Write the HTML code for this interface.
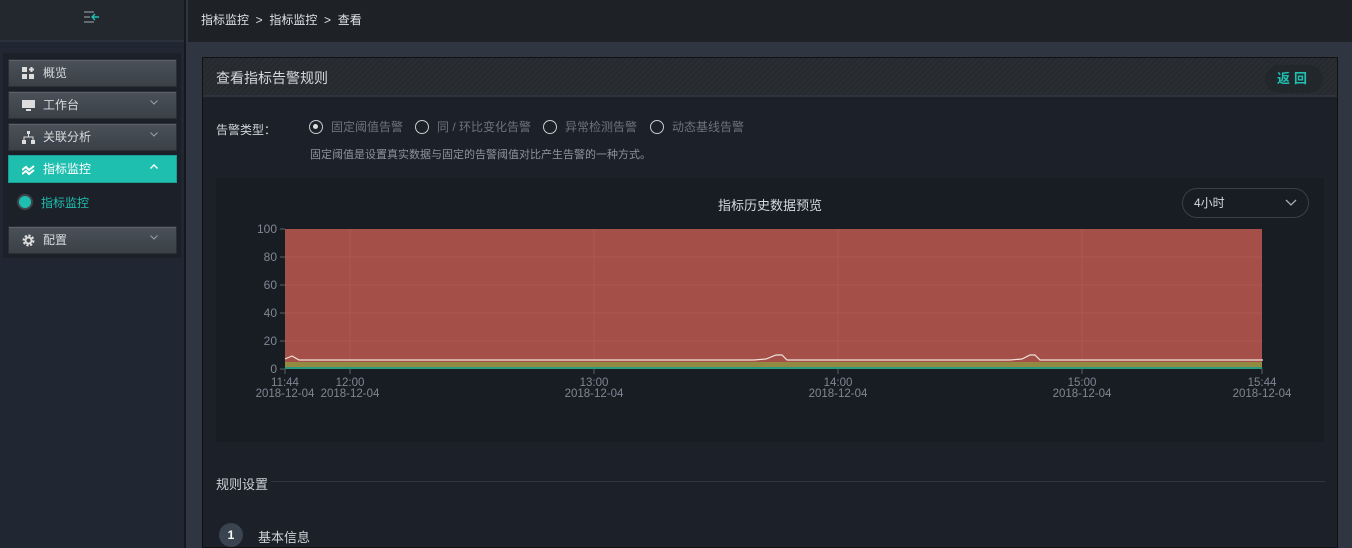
<!DOCTYPE html>
<html><head><meta charset="utf-8"><style>
*{margin:0;padding:0;box-sizing:border-box}
body{width:1352px;height:548px;overflow:hidden;background:#2f3642;font-family:"Liberation Sans","Noto Sans CJK SC",sans-serif;color:#c8ccd2;position:relative}
.sb{position:absolute;left:0;top:0;width:186px;height:548px;background:#212732;border-right:2px solid #15191f}
.sbtop{height:42px;border-bottom:2px solid #2c323b;background:#23282f}
.menu{position:absolute;left:3px;top:53px;width:178px;height:205px;background:#1c2129}
.item{position:absolute;left:5px;width:169px;height:28px;background:linear-gradient(#4a5158,#3a4047);border:1px solid #2a2f35;box-shadow:inset 0 1px 0 #5b6168;font-size:12px;color:#d8dbde;line-height:26px;padding-left:34px}
.item .ic{position:absolute;left:13px;top:7px;width:13px;height:13px}
.item .ar{position:absolute;right:18px;top:8px;width:8px;height:5px}
.act{background:#1fbfb0;box-shadow:none;border-color:#1a9d92;color:#fff}
.top{position:absolute;left:188px;top:0;right:0;height:42px;background:#1e2227;font-size:12px;color:#e0e2e4;line-height:40px;padding-left:13px}
.card{position:absolute;left:202px;top:57px;width:1136px;height:491px;background:#1b2029;border:1px solid #111}
.ch{height:39px;background:repeating-linear-gradient(135deg,#2a2e32 0 2px,#262a2e 2px 4px);border-bottom:2px solid #2d343d;font-size:14px;color:#d6d9dc;line-height:40px;padding-left:13px}
.btn{position:absolute;right:14px;top:7px;width:58px;height:28px;border-radius:14px;background:#22272c;color:#1fc0b0;font-size:13px;text-align:center;line-height:28px;letter-spacing:4px;font-weight:bold}
.rad{position:absolute;top:62px;font-size:12px;color:#6d737b;line-height:14px}
.rad i{display:inline-block;width:14px;height:14px;border:1.5px solid #c8ccd0;border-radius:50%;vertical-align:-3px;margin-right:8px;position:relative}
.chart{position:absolute;left:13px;top:120px;width:1108px;height:264px;background:#181c23}
</style></head><body>
<div class="sb"><div class="sbtop"><svg style="position:absolute;left:83px;top:11px" width="18" height="14"><path d="M1 1h10M1 6h6M1 11h10" stroke="#8b929a" stroke-width="1.2"/><path d="M16 6h-7M12 3l-3 3 3 3" stroke="#1fc0b0" stroke-width="1.4" fill="none"/></svg></div>
<div class="menu">
<div class="item" style="top:6px"><svg class="ic" viewBox="0 0 13 13"><rect x="0" y="0" width="5" height="5" fill="#ddd"/><rect x="0" y="7" width="5" height="5" fill="#ddd"/><rect x="7" y="7" width="5" height="5" fill="#ddd"/><path d="M9.5 0v5M7 2.5h5" stroke="#ddd" stroke-width="2"/></svg>概览</div>
<div class="item" style="top:38px"><svg class="ic" viewBox="0 0 13 13"><rect x="0" y="1" width="13" height="8" fill="#ddd"/><rect x="4" y="10" width="5" height="2" fill="#ddd"/></svg>工作台<svg class="ar"><path d="M0.5 0.5l3.5 3.5 3.5-3.5" stroke="#9aa0a6" fill="none"/></svg></div>
<div class="item" style="top:70px"><svg class="ic" viewBox="0 0 13 13"><rect x="5" y="0" width="3" height="3" fill="#ddd"/><path d="M6.5 3v3M2 9V6h9v3" stroke="#ddd" fill="none"/><rect x="0" y="9" width="4" height="4" fill="#ddd"/><rect x="9" y="9" width="4" height="4" fill="#ddd"/></svg>关联分析<svg class="ar"><path d="M0.5 0.5l3.5 3.5 3.5-3.5" stroke="#9aa0a6" fill="none"/></svg></div>
<div class="item act" style="top:102px"><svg class="ic" viewBox="0 0 13 13"><path d="M0 7l4-3 3 3 5-4M0 11l4-3 3 3 5-4" stroke="#fff" stroke-width="2" fill="none"/></svg>指标监控<svg class="ar"><path d="M0.5 4.5l3.5-3.5 3.5 3.5" stroke="#fff" fill="none" stroke-width="1.4"/></svg></div>
<div style="position:absolute;left:14px;top:141px;width:16px;height:16px;border-radius:50%;border:2px solid #3d4550;background:#1fbfb0;box-shadow:0 0 0 1px #222"></div>
<div style="position:absolute;left:38px;top:141px;font-size:12px;color:#1fc0b0">指标监控</div>
<div class="item" style="top:173px"><svg class="ic" viewBox="0 0 13 13"><circle cx="6.5" cy="6.5" r="4.5" fill="none" stroke="#ddd" stroke-width="3" stroke-dasharray="2 1.5"/><circle cx="6.5" cy="6.5" r="3" fill="none" stroke="#ddd" stroke-width="2"/></svg>配置<svg class="ar"><path d="M0.5 0.5l3.5 3.5 3.5-3.5" stroke="#9aa0a6" fill="none"/></svg></div>
</div></div>
<div class="top">指标监控 &nbsp;&gt;&nbsp; 指标监控 &nbsp;&gt;&nbsp; 查看</div>
<div class="card">
<div class="ch">查看指标告警规则<div class="btn">返回</div></div>
<div style="position:absolute;left:13px;top:63px;font-size:12px;color:#d0d3d6">告警类型：</div>
<div class="rad" style="left:106px"><i><b style="position:absolute;left:3px;top:3px;width:5px;height:5px;border-radius:50%;background:#ddd"></b></i>固定阈值告警</div>
<div class="rad" style="left:212px"><i></i>同 / 环比变化告警</div>
<div class="rad" style="left:340px"><i></i>异常检测告警</div>
<div class="rad" style="left:447px"><i></i>动态基线告警</div>
<div style="position:absolute;left:107px;top:88px;font-size:11px;color:#8b939c">固定阈值是设置真实数据与固定的告警阈值对比产生告警的一种方式。</div>
<div class="chart">
<div style="position:absolute;left:0;width:1108px;top:17px;text-align:center;font-size:13px;color:#d6d9dc">指标历史数据预览</div>
<div style="position:absolute;left:966px;top:10px;width:127px;height:30px;border:1px solid #3a404a;border-radius:15px;font-size:12px;color:#d6d9dc;line-height:28px;padding-left:11px">4小时<svg style="position:absolute;right:11px;top:10px" width="12" height="8"><path d="M1 1l5 5 5-5" stroke="#aab" fill="none" stroke-width="1.3"/></svg></div>
<svg style="position:absolute;left:0;top:0" width="1108" height="264">
<rect x="69" y="51" width="977" height="140" fill="#a44f47"/>
<g stroke="#ab5a50" stroke-width="1"><path d="M69 79h977M69 107h977M69 135h977M69 163h977M134 51v140M378 51v140M622 51v140M866 51v140"/></g>
<rect x="69" y="184" width="977" height="6" fill="#918a40"/>
<rect x="69" y="189" width="977" height="2" fill="#2a9a80"/>
<path d="M69 181l7-3 7 4h455l12-1 10-4h6l5 5h223l12-1 8-4h5l5 5h223" stroke="#f0e4df" fill="none" stroke-width="1.2"/>
<g stroke="#5a626c"><path d="M64 51h5M64 79h5M64 107h5M64 135h5M64 163h5M64 191h5M69 191v5M134 191v5M378 191v5M622 191v5M866 191v5M1046 191v5"/></g>
<g font-size="12" fill="#7e8894" font-family="Liberation Sans" text-anchor="end"><text x="61" y="55">100</text><text x="61" y="83">80</text><text x="61" y="111">60</text><text x="61" y="139">40</text><text x="61" y="167">20</text><text x="61" y="195">0</text></g>
<g font-size="11.5" fill="#7e8894" font-family="Liberation Sans" text-anchor="middle"><text x="69" y="208">11:44</text><text x="69" y="219">2018-12-04</text><text x="134" y="208">12:00</text><text x="134" y="219">2018-12-04</text><text x="378" y="208">13:00</text><text x="378" y="219">2018-12-04</text><text x="622" y="208">14:00</text><text x="622" y="219">2018-12-04</text><text x="866" y="208">15:00</text><text x="866" y="219">2018-12-04</text><text x="1046" y="208">15:44</text><text x="1046" y="219">2018-12-04</text></g>
</svg></div>
<div style="position:absolute;left:13px;top:416px;font-size:13px;color:#d0d3d6">规则设置</div>
<div style="position:absolute;left:68px;top:423px;width:1054px;height:1px;background:#2f3640"></div>
<div style="position:absolute;left:16px;top:465px;width:24px;height:24px;border-radius:50%;background:#3a4350;color:#fff;font-size:12px;font-weight:bold;text-align:center;line-height:24px">1</div>
<div style="position:absolute;left:55px;top:469px;font-size:13px;color:#d0d3d6">基本信息</div>
</div>
</body></html>
